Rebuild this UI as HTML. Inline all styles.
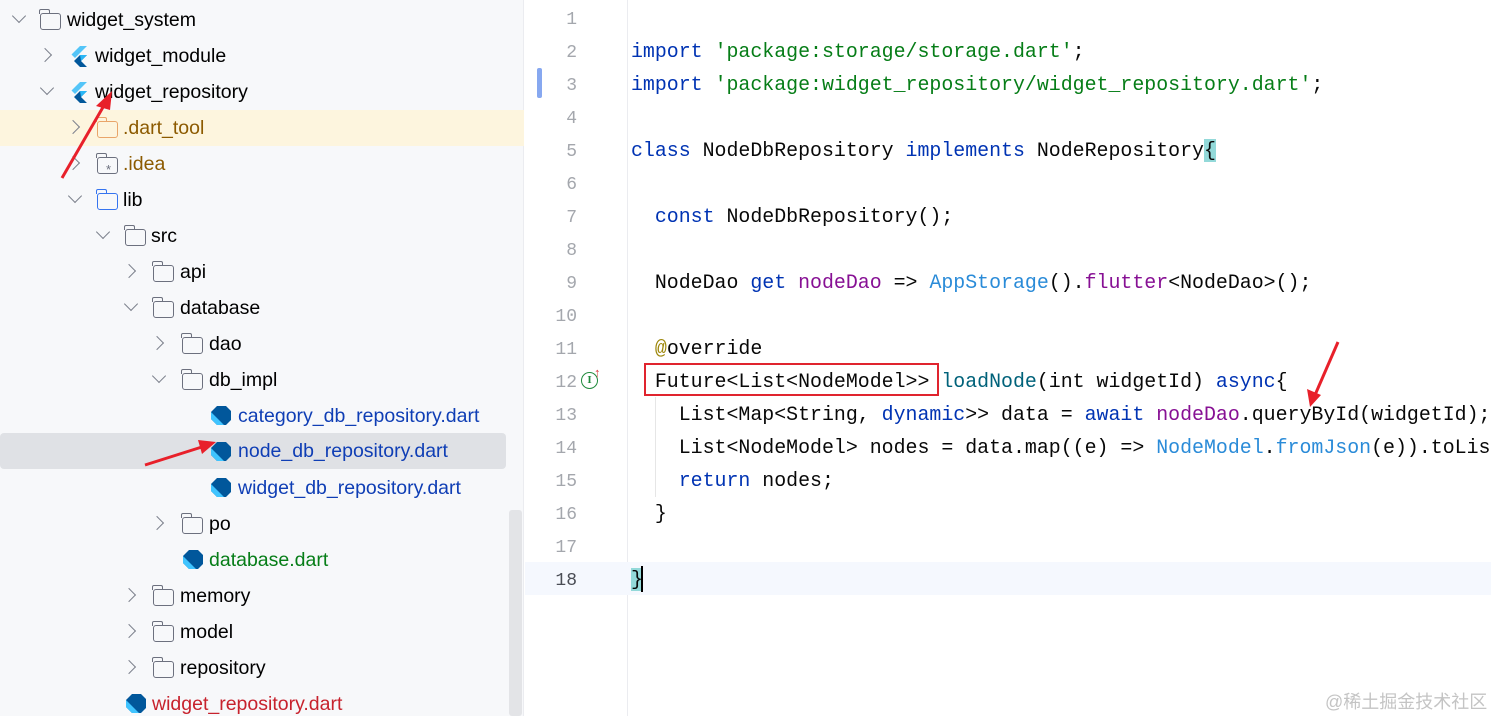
<!DOCTYPE html>
<html><head><meta charset="utf-8"><style>
*{margin:0;padding:0;box-sizing:border-box}
body{width:1491px;height:716px;overflow:hidden;background:#fff;position:relative;font-family:"Liberation Sans",sans-serif}
#tree{position:absolute;left:0;top:0;width:524px;height:716px;background:#f7f8fa;border-right:1px solid #ebecf0}
.r{position:absolute;left:0;height:36px;width:524px;font-size:19.5px;line-height:36px;color:#000;white-space:nowrap}
.r span.t{position:absolute;top:0}
.ch{position:absolute;top:12px;width:10px;height:10px;border-right:1.6px solid #7c808c;border-bottom:1.6px solid #7c808c}
.ch.c{transform:rotate(-45deg)}
.ch.e{transform:rotate(45deg);top:9px}
.fd{position:absolute;top:11px;width:21px;height:17px;border:1.6px solid #6c707e;border-radius:3px}
.fd:before{content:"";position:absolute;left:-1.6px;top:-5px;width:9px;height:4px;border:1.6px solid #6c707e;border-bottom:none;border-radius:2px 2px 0 0}
.fd.b,.fd.b:before{border-color:#3574f0}
.fd.o,.fd.o:before{border-color:#e9a56a}
.ln{position:absolute;left:527px;width:50px;text-align:right;font-family:"Liberation Mono",monospace;font-size:18px;color:#a4a7ad;height:33px;line-height:33px}
.cd{position:absolute;left:631px;font-family:"Liberation Mono",monospace;font-size:19.9px;height:33px;line-height:33px;white-space:pre;color:#080808}
.k{color:#0033b3}.s{color:#067d17}.f{color:#00627a}.p{color:#871094}.c2{color:#2a8bd8}.a{color:#9e880d}
</style></head><body>
<div id="tree">
<div class="r" style="top:2px"><i class="ch e" style="left:14px"></i><i class="fd" style="left:40px"></i><span class="t" style="left:67px">widget_system</span></div>
<div class="r" style="top:38px"><i class="ch c" style="left:40px"></i><svg style="position:absolute;left:70px;top:7px" width="20" height="22" viewBox="0 0 20 22"><path d="M10 1h7L5 13 1.5 9.5z" fill="#54c5f8"/><path d="M10 10h7l-6 6 6 6h-7l-6-6z" fill="#01579b"/><path d="M10 10h7l-6 6z" fill="#29b6f6"/></svg><span class="t" style="left:95px">widget_module</span></div>
<div class="r" style="top:74px"><i class="ch e" style="left:42px"></i><svg style="position:absolute;left:70px;top:7px" width="20" height="22" viewBox="0 0 20 22"><path d="M10 1h7L5 13 1.5 9.5z" fill="#54c5f8"/><path d="M10 10h7l-6 6 6 6h-7l-6-6z" fill="#01579b"/><path d="M10 10h7l-6 6z" fill="#29b6f6"/></svg><span class="t" style="left:95px">widget_repository</span></div>
<div class="r" style="top:110px;background:#fdf5de"><i class="ch c" style="left:68px"></i><i class="fd o" style="left:97px"></i><span class="t" style="left:123px;color:#8c5a00">.dart_tool</span></div>
<div class="r" style="top:146px"><i class="ch c" style="left:68px"></i><i class="fd" style="left:97px"></i><span style="position:absolute;left:106px;top:6px;font-size:13px;color:#6c707e">*</span><span class="t" style="left:123px;color:#8c5a00">.idea</span></div>
<div class="r" style="top:182px"><i class="ch e" style="left:70px"></i><i class="fd b" style="left:97px"></i><span class="t" style="left:123px">lib</span></div>
<div class="r" style="top:218px"><i class="ch e" style="left:98px"></i><i class="fd" style="left:125px"></i><span class="t" style="left:151px">src</span></div>
<div class="r" style="top:254px"><i class="ch c" style="left:124px"></i><i class="fd" style="left:153px"></i><span class="t" style="left:180px">api</span></div>
<div class="r" style="top:290px"><i class="ch e" style="left:126px"></i><i class="fd" style="left:153px"></i><span class="t" style="left:180px">database</span></div>
<div class="r" style="top:326px"><i class="ch c" style="left:152px"></i><i class="fd" style="left:182px"></i><span class="t" style="left:209px">dao</span></div>
<div class="r" style="top:362px"><i class="ch e" style="left:154px"></i><i class="fd" style="left:182px"></i><span class="t" style="left:209px">db_impl</span></div>
<div class="r" style="top:398px"><svg style="position:absolute;left:210px;top:7px" width="22" height="22" viewBox="0 0 22 22"><path d="M7 1h9l5 5v9l-5 5H7L1 14V7z" fill="#01579b"/><path d="M1 7l13 13H7L1 14z" fill="#40c4ff"/></svg><span class="t" style="left:238px;color:#0f3eb5">category_db_repository.dart</span></div>
<div class="r" style="top:433px;width:506px;background:#dfe1e5;border-radius:4px"><svg style="position:absolute;left:210px;top:8px" width="22" height="22" viewBox="0 0 22 22"><path d="M7 1h9l5 5v9l-5 5H7L1 14V7z" fill="#01579b"/><path d="M1 7l13 13H7L1 14z" fill="#40c4ff"/></svg><span class="t" style="left:238px;color:#0f3eb5">node_db_repository.dart</span></div>
<div class="r" style="top:470px"><svg style="position:absolute;left:210px;top:7px" width="22" height="22" viewBox="0 0 22 22"><path d="M7 1h9l5 5v9l-5 5H7L1 14V7z" fill="#01579b"/><path d="M1 7l13 13H7L1 14z" fill="#40c4ff"/></svg><span class="t" style="left:238px;color:#0f3eb5">widget_db_repository.dart</span></div>
<div class="r" style="top:506px"><i class="ch c" style="left:152px"></i><i class="fd" style="left:182px"></i><span class="t" style="left:209px">po</span></div>
<div class="r" style="top:542px"><svg style="position:absolute;left:182px;top:7px" width="22" height="22" viewBox="0 0 22 22"><path d="M7 1h9l5 5v9l-5 5H7L1 14V7z" fill="#01579b"/><path d="M1 7l13 13H7L1 14z" fill="#40c4ff"/></svg><span class="t" style="left:209px;color:#067d17">database.dart</span></div>
<div class="r" style="top:578px"><i class="ch c" style="left:124px"></i><i class="fd" style="left:153px"></i><span class="t" style="left:180px">memory</span></div>
<div class="r" style="top:614px"><i class="ch c" style="left:124px"></i><i class="fd" style="left:153px"></i><span class="t" style="left:180px">model</span></div>
<div class="r" style="top:650px"><i class="ch c" style="left:124px"></i><i class="fd" style="left:153px"></i><span class="t" style="left:180px">repository</span></div>
<div class="r" style="top:686px"><svg style="position:absolute;left:125px;top:7px" width="22" height="22" viewBox="0 0 22 22"><path d="M7 1h9l5 5v9l-5 5H7L1 14V7z" fill="#01579b"/><path d="M1 7l13 13H7L1 14z" fill="#40c4ff"/></svg><span class="t" style="left:152px;color:#c7222d">widget_repository.dart</span></div>
<div style="position:absolute;left:509px;top:510px;width:13px;height:206px;background:#e3e4e7;border-radius:3px"></div>
</div>
<div style="position:absolute;left:627px;top:0;width:1px;height:716px;background:#ebecf0"></div>
<div style="position:absolute;left:525px;top:562px;width:966px;height:33px;background:#f5f8fe"></div>
<div style="position:absolute;left:537px;top:68px;width:5px;height:30px;background:#87a8f0;border-radius:2px"></div>
<div style="position:absolute;left:655px;top:397px;width:1px;height:100px;background:#e6e6e6"></div>
<div class="ln" style="top:4px">1</div><div class="ln" style="top:37px">2</div><div class="ln" style="top:70px">3</div><div class="ln" style="top:103px">4</div><div class="ln" style="top:136px">5</div><div class="ln" style="top:169px">6</div><div class="ln" style="top:202px">7</div><div class="ln" style="top:235px">8</div><div class="ln" style="top:268px">9</div><div class="ln" style="top:301px">10</div><div class="ln" style="top:334px">11</div><div class="ln" style="top:367px">12</div><div class="ln" style="top:400px">13</div><div class="ln" style="top:433px">14</div><div class="ln" style="top:466px">15</div><div class="ln" style="top:499px">16</div><div class="ln" style="top:532px">17</div><div class="ln" style="top:565px;color:#4a4d55">18</div>
<div style="position:absolute;left:581px;top:372px;width:17px;height:17px;border:1.5px solid #208a3c;border-radius:50%;font:bold 11px/14px 'Liberation Serif',serif;color:#208a3c;text-align:center">I</div>
<div style="position:absolute;left:594px;top:365px;font-size:13px;color:#d63a3a">↑</div>
<div class="cd" style="top:35px"><span class="k">import</span> <span class="s">'package:storage/storage.dart'</span>;</div>
<div class="cd" style="top:68px"><span class="k">import</span> <span class="s">'package:widget_repository/widget_repository.dart'</span>;</div>
<div class="cd" style="top:134px"><span class="k">class</span> NodeDbRepository <span class="k">implements</span> NodeRepository<span style="background:#93d9d9">{</span></div>
<div class="cd" style="top:200px">  <span class="k">const</span> NodeDbRepository();</div>
<div class="cd" style="top:266px">  NodeDao <span class="k">get</span> <span class="p">nodeDao</span> =&gt; <span class="c2">AppStorage</span>().<span class="p">flutter</span>&lt;NodeDao&gt;();</div>
<div class="cd" style="top:332px">  <span class="a">@</span>override</div>
<div class="cd" style="top:365px">  Future&lt;List&lt;NodeModel&gt;&gt; <span class="f">loadNode</span>(int widgetId) <span class="k">async</span>{</div>
<div class="cd" style="top:398px">    List&lt;Map&lt;String, <span class="k">dynamic</span>&gt;&gt; data = <span class="k">await</span> <span class="p">nodeDao</span>.queryById(widgetId);</div>
<div class="cd" style="top:431px">    List&lt;NodeModel&gt; nodes = data.map((e) =&gt; <span class="c2">NodeModel</span>.<span class="c2">fromJson</span>(e)).toList();</div>
<div class="cd" style="top:464px">    <span class="k">return</span> nodes;</div>
<div class="cd" style="top:497px">  }</div>
<div class="cd" style="top:563px"><span style="background:#93d9d9">}</span></div>
<div style="position:absolute;left:641px;top:566px;width:2px;height:26px;background:#000"></div>
<div style="position:absolute;left:644px;top:363px;width:295px;height:33px;border:2.5px solid #e0242e"></div>
<svg style="position:absolute;left:0;top:0" width="1491" height="716">
<g fill="#e8202a" stroke="#e8202a">
<path d="M62 178L106 102" stroke-width="3"/><path d="M112 91L96 106L110 110Z" stroke="none"/>
<path d="M145 465L205 446" stroke-width="3"/><path d="M216 442L198 440L202 454Z" stroke="none"/>
<path d="M1338 342L1315 395" stroke-width="3"/><path d="M1310 407L1307 389L1321 395Z" stroke="none"/>
</g></svg>
<div style="position:absolute;left:1325px;top:688px;font:18px 'Liberation Sans','Noto Sans CJK SC',sans-serif;color:#c4c4c4">@稀土掘金技术社区</div>
</body></html>
